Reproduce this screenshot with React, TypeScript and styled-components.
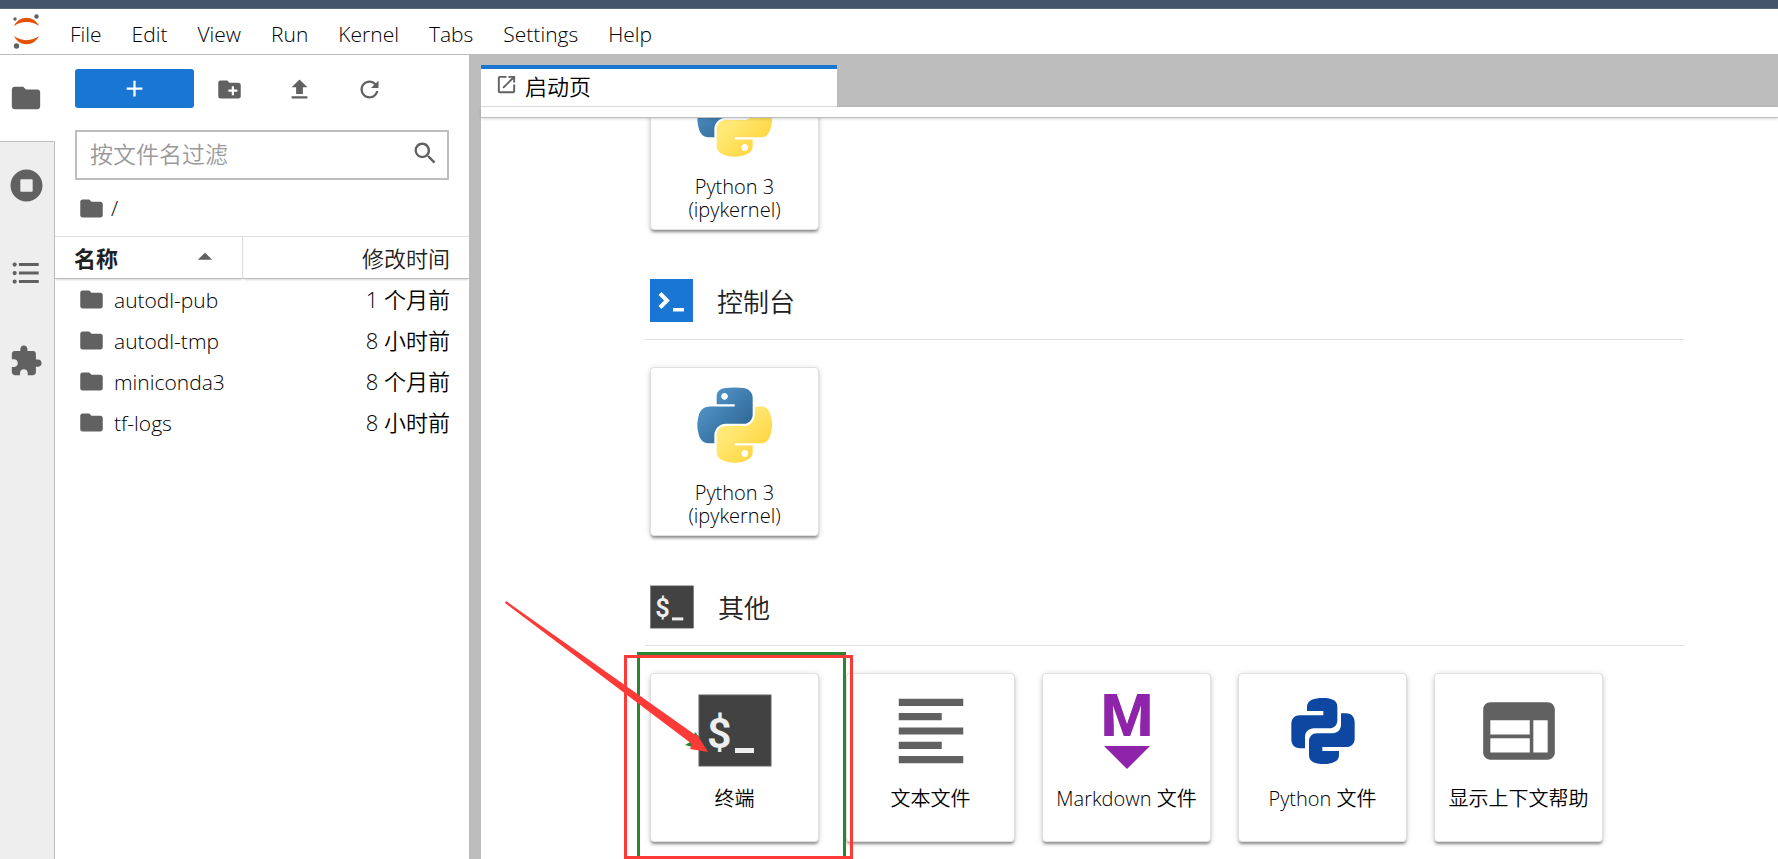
import React from 'react';
import styled, { createGlobalStyle } from 'styled-components';

const cjk = '"Noto Sans CJK SC", "Open Sans", sans-serif';

const GlobalStyle = createGlobalStyle`
  *, *::before, *::after { box-sizing: border-box; }
  body {
    margin: 0;
    background: #fff;
    color: #000;
    font-family: "Open Sans", "Noto Sans CJK SC", sans-serif;
    font-size: 21px;
    font-weight: 350;
  }
  button, input { font: inherit; color: inherit; }
`;

const Page = styled.div`
  display: flex;
  flex-direction: column;
  height: 100vh;
  overflow: hidden;
`;

const TitleStrip = styled.div`
  flex: none;
  height: 9px;
  background: #44546a;
  border-bottom: 1px solid #5b697c;
`;

const MenuBar = styled.header`
  flex: none;
  display: flex;
  align-items: center;
  height: 46px;
  border-bottom: 1px solid #bdbdbd;
`;

const LogoBox = styled.div`
  display: flex;
  width: 55px;
  padding: 0 0 0 12px;
`;

const Menus = styled.nav`
  display: flex;
`;

const MenuItem = styled.button`
  padding: 4px 15px 0;
  border: 0;
  background: none;
  line-height: 28px;
`;

const Body = styled.div`
  flex: 1;
  display: flex;
  min-height: 0;
`;

const SideBar = styled.nav`
  flex: none;
  display: flex;
  flex-direction: column;
  width: 55px;
  background: #eee;
`;

const SideTab = styled.button<{ $active?: boolean }>`
  display: flex;
  align-items: center;
  justify-content: center;
  width: 55px;
  height: ${p => (p.$active ? 87 : 88)}px;
  padding: ${p => (p.$active ? '0 3px 0 0' : '0 2px 2px 0')};
  border: 0;
  border-right: ${p => (p.$active ? 0 : 1)}px solid #bdbdbd;
  border-bottom: ${p => (p.$active ? 1 : 0)}px solid #bdbdbd;
  background: ${p => (p.$active ? '#fff' : 'none')};
`;

const SideRest = styled.div`
  flex: 1;
  border-right: 1px solid #bdbdbd;
`;

const FilePanel = styled.aside`
  flex: none;
  width: 414px;
  background: #fff;
`;

const Toolbar = styled.div`
  display: flex;
  align-items: center;
  height: 39px;
  margin: 14px 20px 22px;
`;

const NewButton = styled.button`
  display: flex;
  align-items: center;
  justify-content: center;
  width: 119px;
  height: 39px;
  padding: 0;
  border: 0;
  border-radius: 3px;
  background: #1976d2;
`;

const ToolButton = styled.button`
  display: flex;
  align-items: center;
  justify-content: center;
  width: 70px;
  height: 39px;
  padding: 2px 0 0 1px;
  border: 0;
  background: none;
`;

const FilterBox = styled.label`
  display: flex;
  align-items: center;
  height: 50px;
  margin: 0 20px;
  padding: 0 9px 4px 13px;
  border: 2px solid #bdbdbd;
`;

const FilterInput = styled.input`
  flex: 1;
  min-width: 0;
  padding: 0;
  border: 0;
  outline: 0;
  font-family: ${cjk};
  font-size: 23px;
  line-height: 34px;
  &::placeholder { color: #999; opacity: 1; }
`;

const Crumbs = styled.div`
  display: flex;
  align-items: center;
  gap: 6px;
  height: 56px;
  padding: 0 23px;
`;

const FileTable = styled.table`
  width: 100%;
  border-collapse: separate;
  border-spacing: 0;
  table-layout: fixed;
`;

const HeadCell = styled.th<{ $time?: boolean }>`
  width: ${p => (p.$time ? 'auto' : '188px')};
  height: 43px;
  padding: ${p => (p.$time ? '0 19px 2px 0' : '0 20px 2px 19px')};
  border-top: 1px solid #e0e0e0;
  border-bottom: 1px solid #bdbdbd;
  border-right: ${p => (p.$time ? 0 : 1)}px solid #e0e0e0;
  box-shadow: 0 2px 2px -1px rgba(0, 0, 0, 0.16);
  color: #212121;
  font-family: ${cjk};
  font-size: 22px;
  font-weight: ${p => (p.$time ? 350 : 700)};
  line-height: 32px;
  text-align: ${p => (p.$time ? 'right' : 'left')};
`;

const HeadLabel = styled.span`
  display: flex;
  align-items: center;
  justify-content: space-between;
`;

const Cell = styled.td`
  height: 41px;
  padding: 0 0 0 23px;
  line-height: 32px;
`;

const FileName = styled.span`
  display: flex;
  align-items: center;
  gap: 9px;
`;

const TimeCell = styled.td`
  padding: 0 19px 2px 0;
  font-size: 22px;
  line-height: 32px;
  text-align: right;
`;

const Dock = styled.main`
  flex: 1;
  display: flex;
  flex-direction: column;
  min-width: 0;
  border-left: 12px solid #bdbdbd;
`;

const TabBar = styled.div`
  flex: none;
  display: flex;
  height: 52px;
  padding-top: 10px;
  background: #bdbdbd;
`;

const DockTab = styled.button`
  display: flex;
  align-items: center;
  gap: 7px;
  width: 356px;
  padding: 0 14px 6px;
  border: 0;
  border-top: 4px solid #1976d2;
  border-bottom: 1px solid #e0e0e0;
  background: #fff;
  font-family: ${cjk};
  font-size: 22px;
  line-height: 32px;
`;

const DockToolbar = styled.div`
  flex: none;
  position: relative;
  height: 11px;
  border-bottom: 1px solid #bdbdbd;
  box-shadow: 0 1px 3px rgba(0, 0, 0, 0.16);
`;

const Launcher = styled.div`
  flex: 1;
  min-height: 0;
  overflow: hidden;
  padding: 0 94px 0 164px;
`;

const SectionHead = styled.h2`
  display: flex;
  align-items: center;
  gap: 24px;
  height: 78px;
  margin: 32px 0 27px;
  padding: 0 5px;
  border-bottom: 1px solid #e0e0e0;
  color: #212121;
  font-family: ${cjk};
  font-size: 26px;
  font-weight: 350;
`;

const CardRow = styled.div<{ $scrolled?: boolean }>`
  display: flex;
  gap: 27px;
  margin-top: ${p => (p.$scrolled ? -57 : 0)}px;
  padding-left: 5px;
`;

const CardSlot = styled.div`
  position: relative;
  flex: none;
`;

const Card = styled.button`
  flex: none;
  display: flex;
  flex-direction: column;
  align-items: center;
  gap: 13px;
  width: 169px;
  height: 169px;
  padding: 14px 0 0;
  border: 1px solid #e0e0e0;
  border-radius: 4px;
  background: #fff;
  box-shadow: 0 3px 3px -1px rgba(0, 0, 0, 0.4), 0 1px 6px rgba(0, 0, 0, 0.14);

  svg { flex: none; overflow: visible; }
`;

const CardLabel = styled.span`
  width: 149px;
  font-size: 20px;
  line-height: 23px;
  text-align: center;
`;

const Markup = styled.svg`
  position: absolute;
  left: -150px;
  top: -80px;
  pointer-events: none;
`;

type IconProps = { d: string; size: number; box?: number; color?: string };

const Icon = ({ d, size, box = 24, color = '#616161' }: IconProps) => (
  <svg width={size} height={size} viewBox={`0 0 ${box} ${box}`} fill={color} aria-hidden="true">
    <path d={d} />
  </svg>
);

const FOLDER = 'M10 4H4c-1.1 0-1.99.9-1.99 2L2 18c0 1.1.9 2 2 2h16c1.1 0 2-.9 2-2V8c0-1.1-.9-2-2-2h-8l-2-2z';
const RUNNING =
  'M256 8C119 8 8 119 8 256s111 248 248 248 248-111 248-248S393 8 256 8zm96 328c0 8.8-7.2 16-16 16H176c-8.8 0-16-7.2-16-16V176c0-8.8 7.2-16 16-16h160c8.8 0 16 7.2 16 16v160z';
const TOC =
  'M7,5H21V7H7V5M7,13V11H21V13H7M4,4.5A1.5,1.5 0 0,1 5.5,6A1.5,1.5 0 0,1 4,7.5A1.5,1.5 0 0,1 2.5,6A1.5,1.5 0 0,1 4,4.5M4,10.5A1.5,1.5 0 0,1 5.5,12A1.5,1.5 0 0,1 4,13.5A1.5,1.5 0 0,1 2.5,12A1.5,1.5 0 0,1 4,10.5M7,19V17H21V19H7M4,16.5A1.5,1.5 0 0,1 5.5,18A1.5,1.5 0 0,1 4,19.5A1.5,1.5 0 0,1 2.5,18A1.5,1.5 0 0,1 4,16.5Z';
const EXTENSION =
  'M20.5 11H19V7c0-1.1-.9-2-2-2h-4V3.5C13 2.12 11.88 1 10.5 1S8 2.12 8 3.5V5H4c-1.1 0-1.99.9-1.99 2v3.8H3.5c1.49 0 2.7 1.21 2.7 2.7s-1.21 2.7-2.7 2.7H2V20c0 1.1.9 2 2 2h3.8v-1.5c0-1.49 1.21-2.7 2.7-2.7 1.49 0 2.7 1.21 2.7 2.7V22H17c1.1 0 2-.9 2-2v-4h1.5c1.38 0 2.5-1.12 2.5-2.5S21.88 11 20.5 11z';
const PLUS = 'M19 13h-6v6h-2v-6H5v-2h6V5h2v6h6v2z';
const NEW_FOLDER =
  'M20 6h-8l-2-2H4c-1.11 0-1.99.89-1.99 2L2 18c0 1.11.89 2 2 2h16c1.11 0 2-.89 2-2V8c0-1.11-.89-2-2-2zm-1 8h-3v3h-2v-3h-3v-2h3V9h2v3h3v2z';
const UPLOAD = 'M5 20h14v-2H5v2zM9 16h6v-6h4l-7-7-7 7h4v6z';
const REFRESH =
  'M9 13.5c-2.49 0-4.5-2.01-4.5-4.5S6.51 4.5 9 4.5c1.24 0 2.36.52 3.17 1.33L10 8h5V3l-1.76 1.76C12.15 3.68 10.66 3 9 3 5.69 3 3.01 5.69 3.01 9S5.69 15 9 15c2.97 0 5.43-2.16 5.9-5h-1.52c-.46 2-2.24 3.5-4.38 3.5z';
const SEARCH =
  'M12.1,10.9h-0.7l-0.2-0.2c0.8-0.9,1.3-2.2,1.3-3.5c0-3-2.4-5.4-5.4-5.4S1.8,4.2,1.8,7.1s2.4,5.4,5.4,5.4c1.3,0,2.5-0.5,3.5-1.3l0.2,0.2v0.7l4.1,4.1l1.2-1.2L12.1,10.9z M7.1,10.9c-2.1,0-3.7-1.7-3.7-3.7s1.7-3.7,3.7-3.7s3.7,1.7,3.7,3.7S9.2,10.9,7.1,10.9z';
const CARET = 'M5.2,10.5l3.8-3.8l3.8,3.8H5.2z';
const LAUNCH =
  'M19 19H5V5h7V3H5a2 2 0 00-2 2v14a2 2 0 002 2h14c1.1 0 2-.9 2-2v-7h-2v7zM14 3v2h3.59l-9.83 9.83 1.41 1.41L19 6.41V10h2V3h-7z';
const TEXT_FILE = 'M15 15H3v2h12v-2zm0-8H3v2h12V7zM3 13h18v-2H3v2zm0 8h18v-2H3v2zM3 3v2h18V3H3z';
const INSPECTOR =
  'M20 4H4c-1.1 0-1.99.9-1.99 2L2 18c0 1.1.9 2 2 2h16c1.1 0 2-.9 2-2V6c0-1.1-.9-2-2-2zm-5 14H4v-4h11v4zm0-5H4V9h11v4zm5 5h-4V9h4v9z';

const JupyterLogo = () => (
  <svg width="30" height="36" viewBox="0 0 30 36" aria-hidden="true">
    <path d="M2 12 C7 1 22 1 27 12 C20 6.500 9 6.500 2 12Z" fill="#e65100" />
    <path d="M2 22 C7 33 22 33 27 22 C20 27.500 9 27.500 2 22Z" fill="#e65100" />
    <circle cx="3" cy="5" r="1.700" fill="#616161" />
    <circle cx="24.500" cy="2.500" r="2.200" fill="#616161" />
    <circle cx="4.500" cy="32" r="2.700" fill="#616161" />
  </svg>
);

const PythonLogo = ({ id }: { id: string }) => (
  <svg width="86" height="86" viewBox="-7 -8 126 128" aria-hidden="true">
    <defs>
      <linearGradient id={`${id}-blue`} x1="0" y1="0" x2="0.8" y2="0.8">
        <stop offset="0" stopColor="#5a9fd4" />
        <stop offset="1" stopColor="#306998" />
      </linearGradient>
      <linearGradient id={`${id}-gold`} x1="0.9" y1="0.8" x2="0.4" y2="0.3">
        <stop offset="0" stopColor="#ffd43b" />
        <stop offset="1" stopColor="#ffe873" />
      </linearGradient>
    </defs>
    <path
      fill={`url(#${id}-blue)`}
      d="M54.9 0C50.300 0 46 .4 42.100 1.100 30.800 3.100 28.700 7.300 28.700 15v10.200h26.800v3.400H18.600c-7.800 0-14.600 4.700-16.700 13.600-2.500 10.200-2.600 16.600 0 27.300 1.900 7.900 6.500 13.600 14.200 13.600h9.200V70.900c0-8.800 7.700-16.700 16.800-16.700h26.800c7.500 0 13.400-6.100 13.400-13.600V15c0-7.300-6.100-12.700-13.400-13.900C64.300.3 59.500 0 54.900 0zM40.400 8.200c2.800 0 5 2.300 5 5.100 0 2.800-2.300 5.100-5 5.100-2.800 0-5-2.300-5-5.100 0-2.800 2.300-5.100 5-5.100z"
    />
    <path
      fill={`url(#${id}-gold)`}
      d="M85.600 28.700v11.900c0 9.200-7.800 17-16.700 17H42.100c-7.300 0-13.400 6.300-13.400 13.600v25.500c0 7.300 6.300 11.500 13.400 13.600 8.500 2.500 16.600 2.900 26.800 0 6.800-2 13.400-5.900 13.400-13.600V86.500H55.500v-3.400h40.200c7.800 0 10.700-5.400 13.400-13.600 2.800-8.400 2.700-16.500 0-27.300-1.900-7.800-5.600-13.600-13.400-13.600zM70.600 93.300c2.800 0 5 2.300 5 5.100 0 2.800-2.300 5.100-5 5.100-2.800 0-5-2.300-5-5.100 0-2.800 2.300-5.100 5-5.100z"
    />
  </svg>
);

const ConsoleIcon = () => (
  <svg width="43" height="43" viewBox="0 0 43 43" aria-hidden="true">
    <rect width="43" height="43" fill="#1976d2" />
    <path d="M10 14.500l7 7-7 7" fill="none" stroke="#fff" strokeWidth="4" />
    <path d="M23 29h11v3.500H23z" fill="#fff" />
  </svg>
);

const TerminalIcon = ({ size, view = '0 0 86 86' }: { size: number; view?: string }) => (
  <svg width={size} height={size} viewBox={view} aria-hidden="true">
    <rect x="7" y="7" width="72" height="71" fill="#424242" stroke="#616161" />
    <text x="15" y="60" fill="#eee" fontFamily="Roboto, sans-serif" fontWeight="600" fontSize="43">$</text>
    <path d="M43 60h19v5H43z" fill="#eee" />
  </svg>
);

const MarkdownIcon = () => (
  <svg width="86" height="86" viewBox="0 0 86 86" fill="#8e24aa" aria-hidden="true">
    <text x="43" y="48" textAnchor="middle" fontFamily="Roboto, sans-serif" fontWeight="800" fontSize="60">M</text>
    <path d="M20 58h46L43 81z" />
  </svg>
);

const PythonFileIcon = () => (
  <svg width="86" height="86" viewBox="174 144 258 258" fill="#0d47a1" aria-hidden="true">
    <path d="M255 213V200C255 180 278 174 301 174C326 174 346 179 346 200V240C346 256 336 265 322 265H276C260 265 249 276 249 292V325H234C217 325 208 313 208 298V252C208 236 218 226 234 226H304V213Z" />
    <path d="M357 220H373C389 220 398 232 398 247V296C398 311 388 321 372 321H301V333H351V346C351 366 328 372 305 372C281 372 261 367 261 346V304C261 290 271 280 285 280H331C347 280 357 269 357 253Z" />
  </svg>
);

const menus = ['File', 'Edit', 'View', 'Run', 'Kernel', 'Tabs', 'Settings', 'Help'];

const files = [
  { name: 'autodl-pub', time: '1 个月前' },
  { name: 'autodl-tmp', time: '8 小时前' },
  { name: 'miniconda3', time: '8 个月前' },
  { name: 'tf-logs', time: '8 小时前' },
];

type LaunchCardProps = { label: string; children: React.ReactNode };

const LaunchCard = ({ label, children }: LaunchCardProps) => (
  <Card>
    {children}
    <CardLabel>{label}</CardLabel>
  </Card>
);

const TerminalMarkup = () => (
  <Markup width="360" height="270" viewBox="0 0 360 270" aria-hidden="true">
    <path d="M138.500 264V60.500H344.500V264" fill="none" stroke="#2e8531" strokeWidth="3" />
    <path d="M195 139L200 145L196 155L185 152L190 149L189 144L193 145Z" fill="#2e8531" />
    <path d="M6 8L194 141L198 143L208 159L190 156L192 151L5 10Z" fill="#fc3a37" />
    <rect x="125.500" y="63.500" width="226" height="201" fill="none" stroke="#fc3a37" strokeWidth="3" />
  </Markup>
);

export default function App() {
  return (
    <Page>
      <GlobalStyle />
      <TitleStrip />
      <MenuBar>
        <LogoBox>
          <JupyterLogo />
        </LogoBox>
        <Menus>
          {menus.map(m => (
            <MenuItem key={m}>{m}</MenuItem>
          ))}
        </Menus>
      </MenuBar>
      <Body>
        <SideBar>
          <SideTab $active aria-label="文件浏览器">
            <Icon d={FOLDER} size={34} />
          </SideTab>
          <SideTab aria-label="运行中的终端和内核">
            <Icon d={RUNNING} size={33} box={512} />
          </SideTab>
          <SideTab aria-label="目录">
            <Icon d={TOC} size={34} />
          </SideTab>
          <SideTab aria-label="扩展管理">
            <Icon d={EXTENSION} size={34} />
          </SideTab>
          <SideRest />
        </SideBar>
        <FilePanel>
          <Toolbar>
            <NewButton aria-label="新建启动页">
              <Icon d={PLUS} size={27} color="#fff" />
            </NewButton>
            <ToolButton aria-label="新建文件夹">
              <Icon d={NEW_FOLDER} size={27} />
            </ToolButton>
            <ToolButton aria-label="上传文件">
              <Icon d={UPLOAD} size={27} />
            </ToolButton>
            <ToolButton aria-label="刷新">
              <Icon d={REFRESH} size={27} box={18} />
            </ToolButton>
          </Toolbar>
          <FilterBox>
            <FilterInput type="text" placeholder="按文件名过滤" aria-label="按文件名过滤" />
            <Icon d={SEARCH} size={26} box={18} />
          </FilterBox>
          <Crumbs>
            <Icon d={FOLDER} size={27} />
            <span>/</span>
          </Crumbs>
          <FileTable>
            <thead>
              <tr>
                <HeadCell>
                  <HeadLabel>
                    名称
                    <Icon d={CARET} size={34} box={18} />
                  </HeadLabel>
                </HeadCell>
                <HeadCell $time>修改时间</HeadCell>
              </tr>
            </thead>
            <tbody>
              {files.map(f => (
                <tr key={f.name}>
                  <Cell>
                    <FileName>
                      <Icon d={FOLDER} size={27} />
                      {f.name}
                    </FileName>
                  </Cell>
                  <TimeCell>{f.time}</TimeCell>
                </tr>
              ))}
            </tbody>
          </FileTable>
        </FilePanel>
        <Dock>
          <TabBar>
            <DockTab>
              <Icon d={LAUNCH} size={23} />
              启动页
            </DockTab>
          </TabBar>
          <DockToolbar />
          <Launcher>
            <CardRow $scrolled>
              <LaunchCard label="Python 3 (ipykernel)">
                <PythonLogo id="notebook" />
              </LaunchCard>
            </CardRow>
            <SectionHead>
              <ConsoleIcon />
              控制台
            </SectionHead>
            <CardRow>
              <LaunchCard label="Python 3 (ipykernel)">
                <PythonLogo id="console" />
              </LaunchCard>
            </CardRow>
            <SectionHead>
              <TerminalIcon size={44} view="6 6 74 73" />
              其他
            </SectionHead>
            <CardRow>
              <CardSlot>
                <LaunchCard label="终端">
                  <TerminalIcon size={86} />
                </LaunchCard>
                <TerminalMarkup />
              </CardSlot>
              <LaunchCard label="文本文件">
                <Icon d={TEXT_FILE} size={86} />
              </LaunchCard>
              <LaunchCard label="Markdown 文件">
                <MarkdownIcon />
              </LaunchCard>
              <LaunchCard label="Python 文件">
                <PythonFileIcon />
              </LaunchCard>
              <LaunchCard label="显示上下文帮助">
                <Icon d={INSPECTOR} size={86} />
              </LaunchCard>
            </CardRow>
          </Launcher>
        </Dock>
      </Body>
    </Page>
  );
}
